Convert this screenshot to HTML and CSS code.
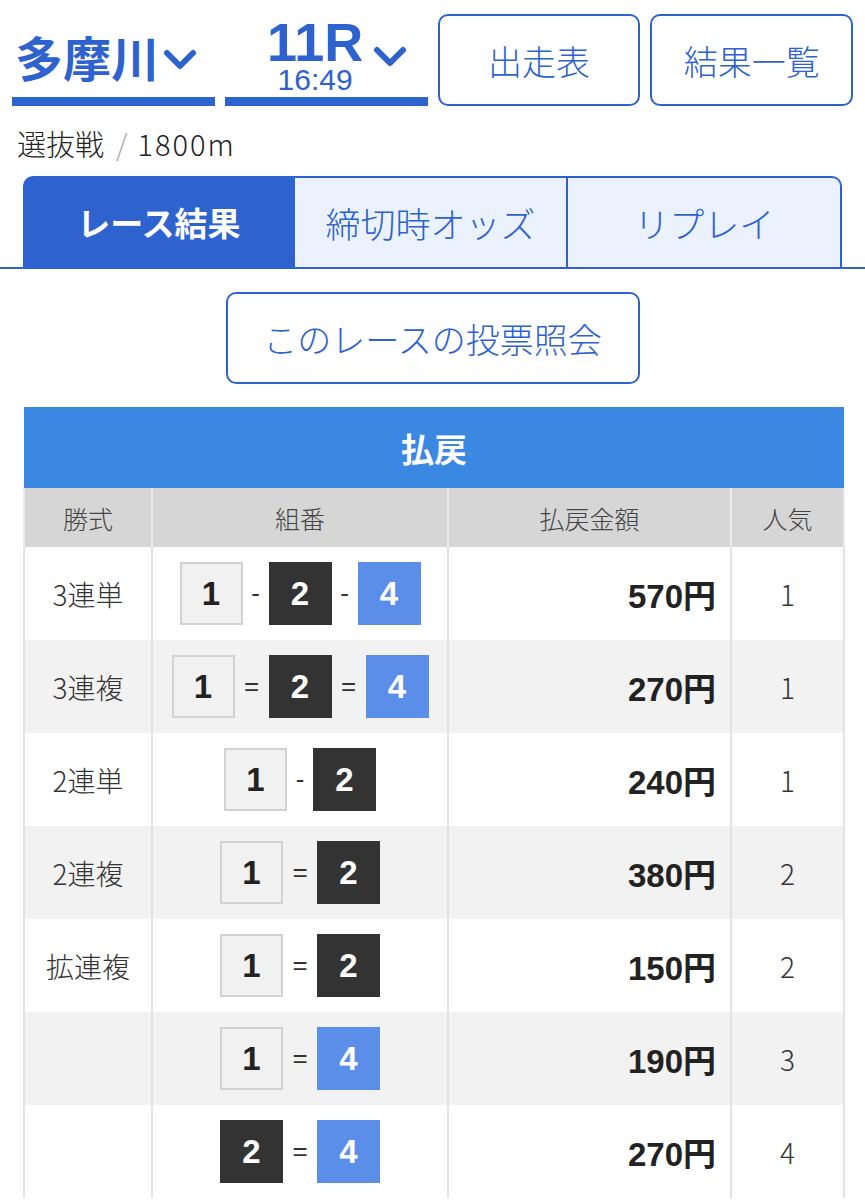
FILE: index.html
```html
<!DOCTYPE html>
<html lang="ja">
<head>
    <meta charset="UTF-8">
    <meta name="viewport" content="width=device-width, initial-scale=1.0">
    <title>払戻 - 多摩川 11R</title>
    <link rel="stylesheet" href="styles.css">
</head>
<body>
    <div class="top">
        <div class="select place">
            <span class="place-name">多摩川</span>
            <svg class="chev" width="34" height="22" viewBox="0 0 34 22"><path d="M4 4 L17 17 L30 4" fill="none" stroke="#2e62cf" stroke-width="6" stroke-linecap="round" stroke-linejoin="round"/></svg>
        </div>
        <div class="select race">
            <div class="race-no">
                <span class="race-r">11R</span>
                <span class="race-time">16:49</span>
            </div>
            <svg class="chev" width="34" height="22" viewBox="0 0 34 22"><path d="M4 4 L17 17 L30 4" fill="none" stroke="#2e62cf" stroke-width="6" stroke-linecap="round" stroke-linejoin="round"/></svg>
        </div>
        <div class="btn">出走表</div>
        <div class="btn">結果一覧</div>
    </div>

    <div class="race-info">選抜戦<span class="slash">/</span><span class="dist">1800m</span></div>

    <div class="tabs">
        <div class="tab active">レース結果</div>
        <div class="tab">締切時オッズ</div>
        <div class="tab">リプレイ</div>
    </div>

    <div class="vote-wrap">
        <div class="btn vote">このレースの投票照会</div>
    </div>

    <table class="payout">
        <colgroup>
            <col class="w-type">
            <col class="w-combo">
            <col class="w-amount">
            <col class="w-pop">
        </colgroup>
        <tr><th class="title" colspan="4">払戻</th></tr>
        <tr class="head">
            <td>勝式</td>
            <td>組番</td>
            <td>払戻金額</td>
            <td>人気</td>
        </tr>
        <tr>
            <td>3連単</td>
            <td class="combo"><span class="n n1">1</span><span class="sep">-</span><span class="n n2">2</span><span class="sep">-</span><span class="n n4">4</span></td>
            <td class="amount">570円</td>
            <td>1</td>
        </tr>
        <tr class="odd">
            <td>3連複</td>
            <td class="combo"><span class="n n1">1</span><span class="sep eq">=</span><span class="n n2">2</span><span class="sep eq">=</span><span class="n n4">4</span></td>
            <td class="amount">270円</td>
            <td>1</td>
        </tr>
        <tr>
            <td>2連単</td>
            <td class="combo"><span class="n n1">1</span><span class="sep">-</span><span class="n n2">2</span></td>
            <td class="amount">240円</td>
            <td>1</td>
        </tr>
        <tr class="odd">
            <td>2連複</td>
            <td class="combo"><span class="n n1">1</span><span class="sep eq">=</span><span class="n n2">2</span></td>
            <td class="amount">380円</td>
            <td>2</td>
        </tr>
        <tr>
            <td>拡連複</td>
            <td class="combo"><span class="n n1">1</span><span class="sep eq">=</span><span class="n n2">2</span></td>
            <td class="amount">150円</td>
            <td>2</td>
        </tr>
        <tr class="odd">
            <td></td>
            <td class="combo"><span class="n n1">1</span><span class="sep eq">=</span><span class="n n4">4</span></td>
            <td class="amount">190円</td>
            <td>3</td>
        </tr>
        <tr>
            <td></td>
            <td class="combo"><span class="n n2">2</span><span class="sep eq">=</span><span class="n n4">4</span></td>
            <td class="amount">270円</td>
            <td>4</td>
        </tr>
    </table>
</body>
</html>
```

FILE: styles.css
```css
body {
    margin: 0;
    font-family: "Noto Sans CJK JP", "Noto Sans", sans-serif;
    color: #222;
    background: #fff;
}

.top {
    display: flex;
    gap: 10px;
    padding: 14px 12px 0 12px;
}

.select {
    box-sizing: border-box;
    width: 203px;
    height: 92px;
    border-bottom: 9px solid #2e62cf;
    display: flex;
    align-items: center;
    color: #2e62cf;
}

.place {
    padding-left: 3px;
}

.place-name {
    font-size: 48px;
    font-weight: bold;
}

.place .chev {
    margin-left: 4px;
    margin-top: 8px;
}

.race {
    justify-content: center;
    padding-left: 22px;
}

.race-no {
    display: flex;
    flex-direction: column;
    align-items: center;
    gap: 3px;
    margin-top: 4px;
}

.race-r {
    font-family: "Liberation Sans", "Noto Sans CJK JP", sans-serif;
    font-size: 54px;
    font-weight: bold;
    line-height: 42px;
}

.race-time {
    font-family: "Liberation Sans", "Noto Sans CJK JP", sans-serif;
    font-size: 30px;
    line-height: 28px;
}

.race .chev {
    margin-left: 10px;
    margin-top: 2px;
}

.btn {
    box-sizing: border-box;
    width: 203px;
    height: 92px;
    border: 2px solid #2e62cf;
    border-radius: 10px;
    display: flex;
    align-items: center;
    justify-content: center;
    color: #2e62cf;
    font-size: 34px;
    font-weight: 300;
}

.race-info {
    padding: 15px 0 0 17px;
    font-size: 29px;
    font-weight: 300;
    color: #222;
    height: 44px;
    line-height: 44px;
}

.slash {
    color: #aaa;
    margin: 0 10px 0 12px;
}

.dist {
    letter-spacing: 2px;
}

.tabs {
    display: flex;
    margin-top: 11px;
    padding: 0 23px;
    border-bottom: 2px solid #2e62cf;
}

.tab {
    box-sizing: border-box;
    flex: 1;
    height: 91px;
    display: flex;
    align-items: center;
    justify-content: center;
    background: #ebf2fd;
    color: #2e62cf;
    font-size: 35px;
    font-weight: 300;
    border-top: 2px solid #2e62cf;
    border-right: 2px solid #2e62cf;
}

.tab:first-child {
    border-top-left-radius: 10px;
}

.tab:last-child {
    border-top-right-radius: 10px;
}

.tab.active {
    background: #2e62cf;
    color: #fff;
    font-size: 33px;
    font-weight: bold;
    border: none;
}

.vote-wrap {
    display: flex;
    justify-content: center;
    padding-top: 23px;
}

.btn.vote {
    width: 414px;
    height: 92px;
    font-size: 34px;
}

.payout {
    margin: 23px 0 0 23px;
    width: 820px;
    border-collapse: collapse;
    table-layout: fixed;
}

.w-type {
    width: 128px;
}

.w-combo {
    width: 296px;
}

.w-amount {
    width: 283px;
}

.w-pop {
    width: 113px;
}

.payout th.title {
    background: #3a88e2;
    color: #fff;
    font-size: 33px;
    font-weight: bold;
    height: 81px;
    padding: 0;
}

.payout td {
    border-left: 2px solid #e3e3e3;
    border-right: 2px solid #e3e3e3;
    height: 93px;
    padding: 0;
    text-align: center;
    font-size: 28px;
    font-weight: 300;
    color: #333;
    white-space: nowrap;
}

.payout tr.head td {
    background: #d6d6d6;
    border-color: #ececec;
    height: 59px;
    font-size: 25px;
    color: #444;
}

.payout tr.odd td {
    background: #f2f2f2;
}

.payout td.amount {
    text-align: right;
    padding-right: 14px;
    font-family: "Liberation Sans", "Noto Sans CJK JP", sans-serif;
    font-size: 33px;
    font-weight: bold;
    color: #222;
}

.n {
    display: inline-flex;
    align-items: center;
    justify-content: center;
    box-sizing: border-box;
    width: 63px;
    height: 63px;
    font-family: "Liberation Sans", sans-serif;
    font-size: 33px;
    font-weight: bold;
    vertical-align: middle;
}

.n1 {
    background: #f1f1f1;
    border: 2px solid #d2d2d2;
    color: #222;
}

.n2 {
    background: #333;
    color: #fff;
}

.n4 {
    background: #5a8ee9;
    color: #fff;
}

.sep {
    display: inline-block;
    width: 26px;
    text-align: center;
    vertical-align: middle;
    font-family: "Liberation Sans", sans-serif;
    font-size: 26px;
    color: #333;
}

.sep.eq {
    width: 34px;
}
```
